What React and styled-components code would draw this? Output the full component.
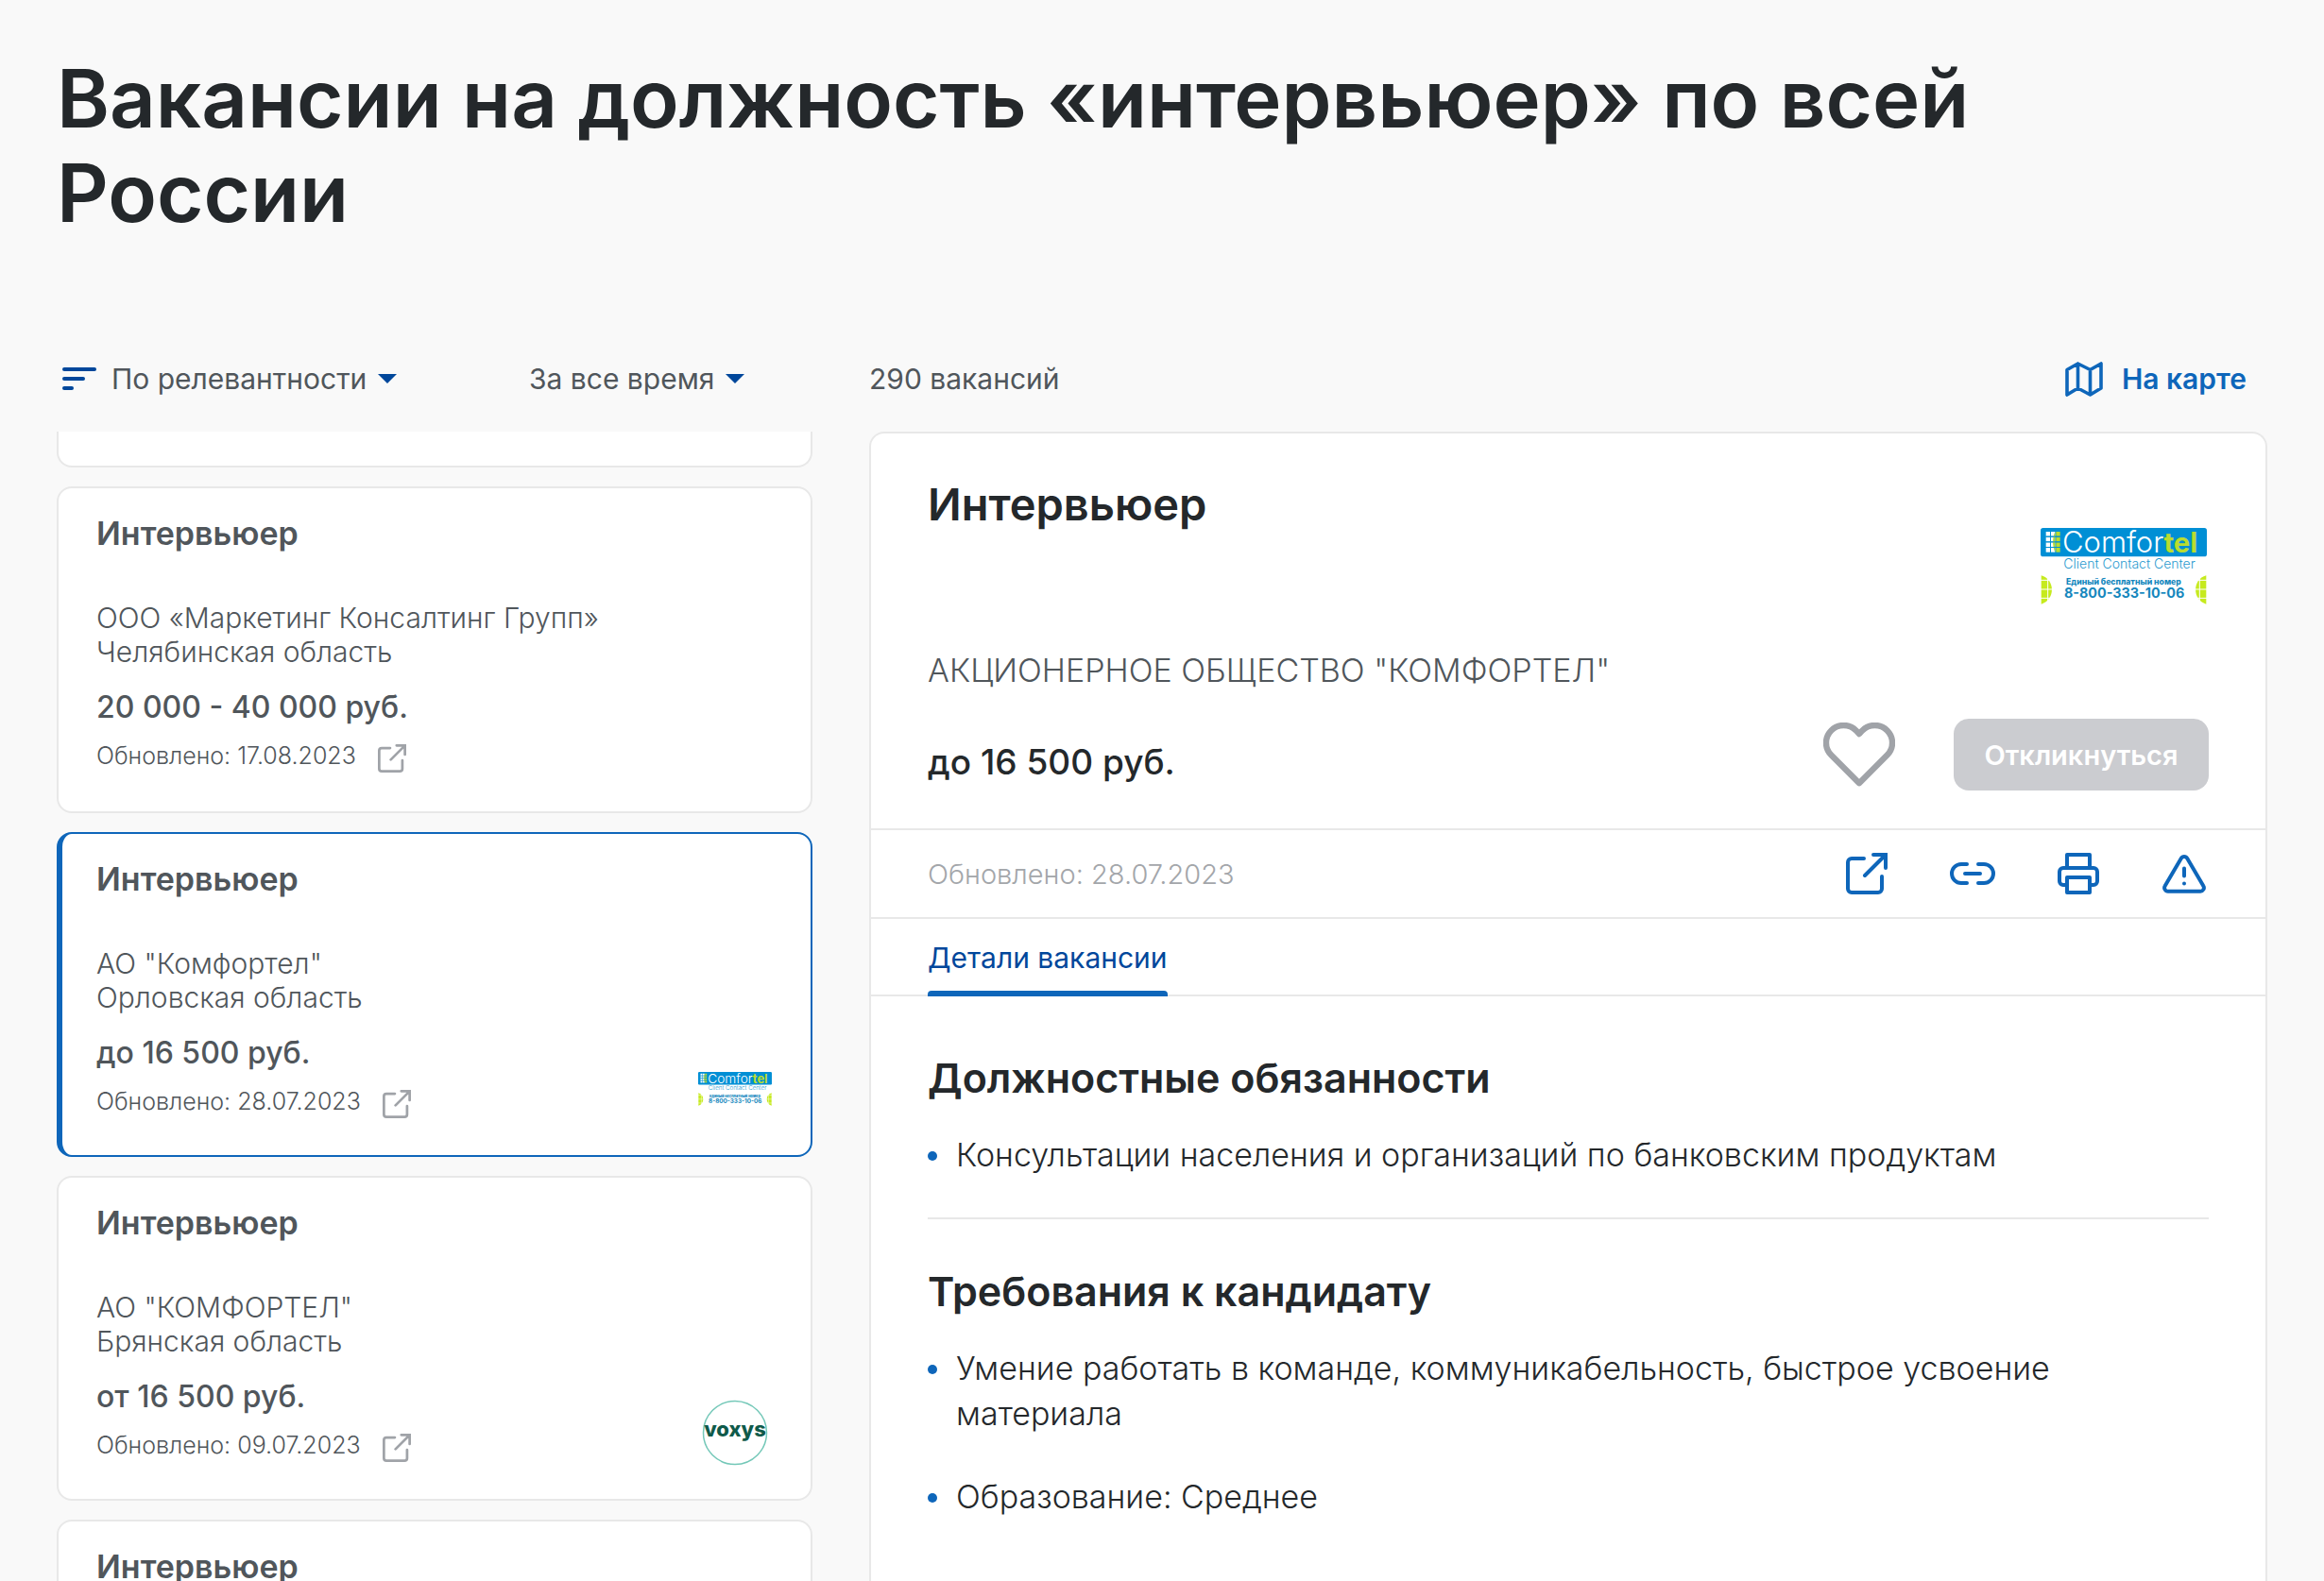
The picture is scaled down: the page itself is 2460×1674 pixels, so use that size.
import React from 'react';
import styled, { createGlobalStyle, css } from 'styled-components';


const GlobalStyle = createGlobalStyle`
    * {
        box-sizing: border-box;
    }

    body {
        margin: 0;
        background: #f9f9f9;
        color: #24282b;
        font-family: Inter, 'Open Sans', sans-serif;
    }

    h1, h2, h3, p, ul {
        margin: 0;
        padding: 0;
    }

    button, select {
        font-family: inherit;
    }
`

const Page = styled.main`
    display: flex;
    flex-direction: column;
    height: 100vh;
    padding: 55px 60px 0;
    overflow: hidden;
`

const PageTitle = styled.h1`
    font-size: 85px;
    font-weight: 600;
    line-height: 100px;
`

const Columns = styled.div`
    display: grid;
    grid-template-columns: 800px 1fr;
    column-gap: 60px;
`

const Toolbar = styled(Columns)`
    margin-top: 126px;
    margin-bottom: 36px;
    color: #50565b;
    font-size: 30px;
    line-height: 40px;
`

const Content = styled(Columns)`
    flex: 1;
    min-height: 0;
`

const Filters = styled.div`
    display: grid;
    grid-template-columns: 5fr 3fr;
`

const Filter = styled.label`
    display: flex;
    align-items: center;

    > svg:first-child {
        margin: 0 16px 0 6px;
    }
`

const FilterSelect = styled.select`
    appearance: none;
    margin: 0;
    padding: 0 11px 0 0;
    border: none;
    background: none;
    color: inherit;
    font-size: 30px;
    line-height: 40px;
`

const ResultBar = styled.div`
    display: flex;
    align-items: center;
    justify-content: space-between;
    padding-right: 22px;
`

const MapLink = styled.a`
    display: flex;
    align-items: center;
    gap: 20px;
    color: #0e66ba;
    font-size: 30px;
    font-weight: 600;
    text-decoration: none;
`


/* ---- list ---- */

const List = styled.div`
    display: flex;
    flex-direction: column;
    gap: 20px;
    overflow: hidden;
`

const Card = styled.article`
    display: flex;
    flex-shrink: 0;
    justify-content: space-between;
    min-height: ${(p) => (p.$withLogo ? 344 : 346)}px;
    padding: 28px 40px 30px;
    border: 2px solid #e8e8e8;
    border-radius: 16px;
    background: #fff;
    color: #50565b;

    ${(p) => p.$active && css`
        padding-left: 36px;
        border-color: #0e66ba;
        border-left-width: 6px;
    `}
`

// bottom edge of the card that is scrolled out of the list
const CardTail = styled.div`
    flex-shrink: 0;
    height: 38px;
    border: 2px solid #e8e8e8;
    border-top: none;
    border-radius: 0 0 16px 16px;
    background: #fff;
`

const CardTitle = styled.h3`
    margin-bottom: 51px;
    font-size: 34px;
    font-weight: 600;
    line-height: 40px;
`

const CardText = styled.p`
    font-size: 30px;
    font-weight: 300;
    line-height: 36px;
`

const CardSalary = styled.p`
    margin: 21px 0 15px;
    font-size: 32px;
    font-weight: 500;
    line-height: 40px;
`

const CardUpdated = styled.div`
    display: flex;
    gap: 23px;
    font-size: 25px;
    font-weight: 300;
    line-height: 32px;

    a {
        height: 30px;
        margin-top: 4px;
        color: #a0a3a8;
    }

    svg {
        display: block;
    }
`

const LogoBox = styled.div`
    display: flex;
    flex-shrink: 0;
    align-items: center;
    justify-content: center;
    align-self: ${(p) => (p.$large ? 'flex-start' : 'flex-end')};
    width: ${(p) => (p.$large ? 180 : 80)}px;
    height: ${(p) => (p.$large ? 180 : 80)}px;

    svg {
        overflow: visible;
    }
`


/* ---- details ---- */

const Panel = styled.section`
    border: 2px solid #e8e8e8;
    border-bottom: none;
    border-radius: 16px 16px 0 0;
    background: #fff;
`

const PanelHead = styled.header`
    padding: 51px 60px 40px;
    border-bottom: 2px solid #e8e8e8;
`

const HeadTop = styled.div`
    display: flex;
    justify-content: space-between;
`

const VacancyTitle = styled.h2`
    font-size: 47px;
    font-weight: 600;
    line-height: 48px;
`

const Company = styled.p`
    color: #50565b;
    font-size: 34px;
    font-weight: 300;
    line-height: 40px;
`

const HeadBottom = styled.div`
    display: flex;
    align-items: flex-end;
    margin-top: 31px;
`

const Salary = styled.p`
    flex: 1;
    font-size: 37px;
    font-weight: 500;
    line-height: 60px;
`

const IconButton = styled.button`
    display: flex;
    align-items: center;
    justify-content: center;
    width: ${(p) => p.$size}px;
    height: ${(p) => p.$size}px;
    padding: 0;
    border: none;
    background: none;
    color: ${(p) => p.$color || '#0e66ba'};
`

const ReplyButton = styled.button`
    width: 270px;
    height: 76px;
    margin-left: 62px;
    padding: 0;
    border: none;
    border-radius: 16px;
    background: #cbccd0;
    color: #fff;
    font-size: 29px;
    font-weight: 600;
`

const MetaRow = styled.div`
    display: flex;
    align-items: center;
    justify-content: space-between;
    height: 94px;
    padding: 0 60px;
    border-bottom: 2px solid #e8e8e8;
    color: #a3a6aa;
    font-size: 29px;
    font-weight: 300;
`

const Actions = styled.div`
    display: flex;
    gap: 60px;
`

const Tabs = styled.nav`
    display: flex;
    height: 82px;
    padding: 0 60px;
    border-bottom: 2px solid #e8e8e8;
`

const Tab = styled.a`
    position: relative;
    padding-top: 21px;
    color: #00479b;
    font-size: 30px;
    line-height: 40px;
    text-decoration: none;

    &::after {
        content: '';
        position: absolute;
        right: 0;
        bottom: -2px;
        left: 0;
        height: 6px;
        border-radius: 4px 4px 0 0;
        background: #0e66ba;
    }
`

const Details = styled.div`
    padding: 10px 60px 0;
`

const Section = styled.section`
    padding: 52px 0 42px;

    & + & {
        border-top: 2px solid #e8e8e8;
    }
`

const SectionTitle = styled.h3`
    margin-bottom: 34px;
    font-size: 43px;
    font-weight: 600;
    line-height: 48px;
`

const Bullets = styled.ul`
    display: flex;
    flex-direction: column;
    gap: 40px;
    list-style: none;
`

const Bullet = styled.li`
    display: flex;
    gap: 20px;
    font-size: 34px;
    font-weight: 300;
    line-height: 48px;

    &::before {
        content: '';
        flex-shrink: 0;
        width: 10px;
        height: 10px;
        margin-top: 20px;
        border-radius: 50%;
        background: #0e66ba;
    }
`


/* ---- icons ---- */

const stroke = {
    fill: 'none',
    stroke: 'currentColor',
    strokeWidth: 4,
    strokeLinecap: 'round',
    strokeLinejoin: 'round',
    'aria-hidden': true,
}

const SortIcon = () => (
    <svg width="36" height="24" viewBox="0 0 36 24" fill="#00479b" aria-hidden="true">
        <rect width="36" height="4" rx="2" />
        <rect y="10" width="24" height="4" rx="2" />
        <rect y="20" width="12" height="4" rx="2" />
    </svg>
)

const Caret = () => (
    <svg width="20" height="10" viewBox="0 0 20 10" fill="#00479b" aria-hidden="true">
        <path d="M0 0h20L10 10z" />
    </svg>
)

const MapIcon = () => (
    <svg width="40" height="37" viewBox="0 0 40 37" {...stroke} strokeWidth={3.6}>
        <path d="M2 8.5 13.5 2l13 6.5L38 2v26l-11.500 7-13-7L2 35zM13.500 2v26M26.500 8.500V35" />
    </svg>
)

const ExternalIcon = ({ size = 44 }) => (
    <svg width={size} height={size} viewBox="0 0 44 44" {...stroke}>
        <path d="M19 6H6a4 4 0 0 0-4 4v28a4 4 0 0 0 4 4h28a4 4 0 0 0 4-4V25" />
        <path d="M29 2h13v14M42 2 20 24" strokeLinejoin="miter" />
    </svg>
)

const LinkIcon = () => (
    <svg width="48" height="24" viewBox="0 0 48 24" {...stroke}>
        <path d="M18 2h-6a10 10 0 0 0 0 20h6M30 2h6a10 10 0 0 1 0 20h-6M16 12h16" />
    </svg>
)

const PrintIcon = () => (
    <svg width="44" height="44" viewBox="0 0 44 44" {...stroke}>
        <path d="M10 16V2h24v14M8 34H6a4 4 0 0 1-4-4V20a4 4 0 0 1 4-4h32a4 4 0 0 1 4 4v10a4 4 0 0 1-4 4h-2" />
        <path d="M10 26h24v16H10z" />
    </svg>
)

const WarningIcon = () => (
    <svg width="46" height="41" viewBox="0 0 46 41" {...stroke}>
        <path d="M19.700 4 2.700 33a3.800 3.800 0 0 0 3.300 5.800h34a3.800 3.800 0 0 0 3.300-5.800L26.300 4a3.800 3.800 0 0 0-6.600 0zM23 14.500v8M23 30.500v.1" />
    </svg>
)

const HeartIcon = () => (
    <svg width="76" height="68" viewBox="0 0 76 68" {...stroke} strokeWidth={6.4}>
        <path d="M38 64.200 8.400 34.600A18.500 18.500 0 0 1 34.600 8.400L38 12l3.400-3.600a18.500 18.500 0 0 1 26.200 26.200z" />
    </svg>
)

const ComfortelLogo = ({ width }) => (
    <svg width={width} viewBox="0 0 528 244" fontFamily="Inter, sans-serif" role="img" aria-label="Comfortel">
        <rect width="528" height="91" rx="8" fill="#008fd5" />
        {[12, 29, 46, 63].map((y) => (
            <g key={y} fill="#fff">
                <rect x="17" y={y} width="13" height="14" />
                <rect x="33" y={y} width="13" height="14" />
                <rect x="49" y={y} width="13" height="14" fill="#b9dc2f" />
            </g>
        ))}
        <path d="M46 12c-9 18-9 47 0 65z" fill="#b9dc2f" />
        <path d="M17 27.500h45M17 44.500h45M17 61.500h45" stroke="#008fd5" strokeWidth="3" />
        <text x="69" y="78" fontSize="93" fontWeight="300" fill="#fff">
            Comfor<tspan fontSize="88" fontWeight="700" fill="#b9dc2f">tel</tspan>
        </text>
        <text x="73" y="129" fontSize="42" fontWeight="300" fill="#2b9bd0">Client Contact Center</text>
        <text x="81" y="181" fontSize="26" fontWeight="800" fill="#1587bd">Единый бесплатный номер</text>
        <text x="75" y="222" fontSize="43" fontWeight="700" fill="#1587bd">8-800-333-10-06</text>
        <g fill="#c6ea1e">
            <path d="M2 151c45 12 45 78 0 91z" />
            <path d="M526 151c-45 12-45 78 0 91z" />
        </g>
        <path d="M0 166h40M0 195h40M0 223h40M23 150v93M488 166h40M488 195h40M488 223h40M505 150v93" stroke="#fff" strokeWidth="3" />
    </svg>
)

const VoxysLogo = () => (
    <svg width="70" height="70" viewBox="0 0 70 70" role="img" aria-label="voxys">
        <circle cx="35" cy="35" r="33.500" fill="none" stroke="#74c8b8" strokeWidth="1.500" />
        <text x="35" y="39" textAnchor="middle" fontFamily="Inter, sans-serif" fontSize="22" fontWeight="800" fill="#0f5a4a">voxys</text>
    </svg>
)


const vacancies = [
    { id: 1, company: 'ООО «Маркетинг Консалтинг Групп»', region: 'Челябинская область', salary: '20 000 - 40 000 руб.', updated: '17.08.2023' },
    { id: 2, company: 'АО "Комфортел"', region: 'Орловская область', salary: 'до 16 500 руб.', updated: '28.07.2023', logo: <ComfortelLogo width={78} />, active: true },
    { id: 3, company: 'АО "КОМФОРТЕЛ"', region: 'Брянская область', salary: 'от 16 500 руб.', updated: '09.07.2023', logo: <VoxysLogo /> },
    { id: 4 },
]

const VacancyCard = ({ vacancy }) => (
    <Card $active={vacancy.active} $withLogo={Boolean(vacancy.logo)}>
        <div>
            <CardTitle>Интервьюер</CardTitle>
            {vacancy.company && (
                <>
                    <CardText>{vacancy.company}</CardText>
                    <CardText>{vacancy.region}</CardText>
                    <CardSalary>{vacancy.salary}</CardSalary>
                    <CardUpdated>
                        <span>Обновлено: {vacancy.updated}</span>
                        <a href="#vacancy" aria-label="Открыть вакансию"><ExternalIcon size={30} /></a>
                    </CardUpdated>
                </>
            )}
        </div>
        {vacancy.logo && <LogoBox>{vacancy.logo}</LogoBox>}
    </Card>
)


const App = () => {

    return (
        <Page>
            <GlobalStyle />

            <PageTitle>Вакансии на должность «интервьюер» по всей России</PageTitle>

            <Toolbar>
                <Filters>
                    <Filter>
                        <SortIcon />
                        <FilterSelect aria-label="Сортировка">
                            <option>По релевантности</option>
                        </FilterSelect>
                        <Caret />
                    </Filter>
                    <Filter>
                        <FilterSelect aria-label="Период">
                            <option>За все время</option>
                        </FilterSelect>
                        <Caret />
                    </Filter>
                </Filters>
                <ResultBar>
                    <span>290 вакансий</span>
                    <MapLink href="#map"><MapIcon />На карте</MapLink>
                </ResultBar>
            </Toolbar>

            <Content>
                <List>
                    <CardTail />
                    {vacancies.map((v) => <VacancyCard key={v.id} vacancy={v} />)}
                </List>

                <Panel>
                    <PanelHead>
                        <HeadTop>
                            <VacancyTitle>Интервьюер</VacancyTitle>
                            <LogoBox $large><ComfortelLogo width={176} /></LogoBox>
                        </HeadTop>
                        <Company>АКЦИОНЕРНОЕ ОБЩЕСТВО "КОМФОРТЕЛ"</Company>
                        <HeadBottom>
                            <Salary>до 16 500 руб.</Salary>
                            <IconButton $size={76} $color="#a0a3a8" aria-label="В избранное"><HeartIcon /></IconButton>
                            <ReplyButton>Откликнуться</ReplyButton>
                        </HeadBottom>
                    </PanelHead>

                    <MetaRow>
                        <span>Обновлено: 28.07.2023</span>
                        <Actions>
                            <IconButton $size={52} aria-label="Открыть"><ExternalIcon /></IconButton>
                            <IconButton $size={52} aria-label="Ссылка"><LinkIcon /></IconButton>
                            <IconButton $size={52} aria-label="Печать"><PrintIcon /></IconButton>
                            <IconButton $size={52} aria-label="Пожаловаться"><WarningIcon /></IconButton>
                        </Actions>
                    </MetaRow>

                    <Tabs>
                        <Tab href="#details">Детали вакансии</Tab>
                    </Tabs>

                    <Details>
                        <Section>
                            <SectionTitle>Должностные обязанности</SectionTitle>
                            <Bullets>
                                <Bullet>Консультации населения и организаций по банковским продуктам</Bullet>
                            </Bullets>
                        </Section>
                        <Section>
                            <SectionTitle>Требования к кандидату</SectionTitle>
                            <Bullets>
                                <Bullet>Умение работать в команде, коммуникабельность, быстрое усвоение материала</Bullet>
                                <Bullet>Образование: Среднее</Bullet>
                            </Bullets>
                        </Section>
                    </Details>
                </Panel>
            </Content>
        </Page>
    )
}

export default App;
